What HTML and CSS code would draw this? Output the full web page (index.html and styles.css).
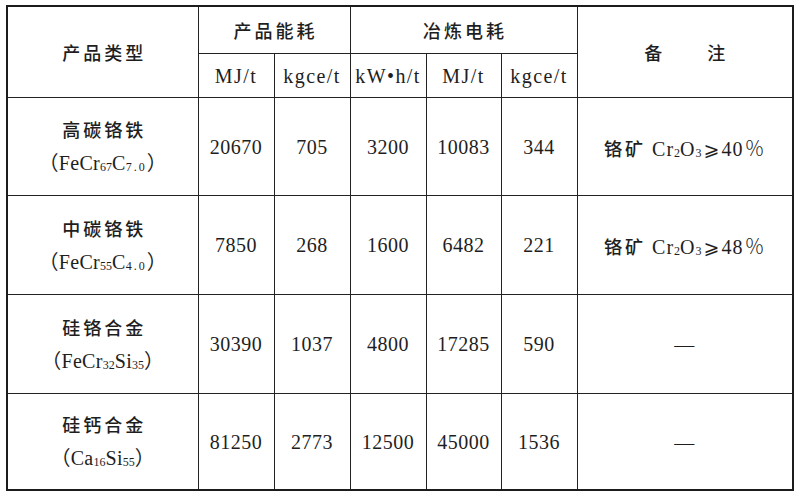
FILE: index.html
```html
<!DOCTYPE html>
<html lang="zh">
<head>
<meta charset="utf-8">
<link rel="stylesheet" href="styles.css">
</head>
<body>
<div class="page">
<table class="tbl">
  <colgroup>
    <col class="c-name"><col class="c-num"><col class="c-num"><col class="c-num"><col class="c-num5"><col class="c-num"><col class="c-note">
  </colgroup>
  <tr class="h1">
    <th rowspan="2" class="cjk">产品类型</th>
    <th colspan="2" class="cjk">产品能耗</th>
    <th colspan="3" class="cjk">冶炼电耗</th>
    <th rowspan="2" class="cjk">备　　注</th>
  </tr>
  <tr class="h2">
    <td class="unit">MJ/t</td>
    <td class="unit">kgce/t</td>
    <td class="unit">kW•h/t</td>
    <td class="unit">MJ/t</td>
    <td class="unit">kgce/t</td>
  </tr>
  <tr class="r1">
    <td class="name"><div class="cjk">高碳铬铁</div><div class="f">（FeCr<sub>67</sub>C<sub class="dot">7.0</sub>）</div></td>
    <td class="num">20670</td><td class="num">705</td><td class="num">3200</td><td class="num">10083</td><td class="num">344</td>
    <td class="note"><span class="cjk">铬矿</span> Cr<sub>2</sub>O<sub>3</sub><span class="ge">⩾</span>40<span class="pc">％</span></td>
  </tr>
  <tr class="r2">
    <td class="name"><div class="cjk">中碳铬铁</div><div class="f">（FeCr<sub>55</sub>C<sub class="dot">4.0</sub>）</div></td>
    <td class="num">7850</td><td class="num">268</td><td class="num">1600</td><td class="num">6482</td><td class="num">221</td>
    <td class="note"><span class="cjk">铬矿</span> Cr<sub>2</sub>O<sub>3</sub><span class="ge">⩾</span>48<span class="pc">％</span></td>
  </tr>
  <tr class="r3">
    <td class="name"><div class="cjk">硅铬合金</div><div class="f">（FeCr<sub>32</sub>Si<sub>35</sub>）</div></td>
    <td class="num">30390</td><td class="num">1037</td><td class="num">4800</td><td class="num">17285</td><td class="num">590</td>
    <td class="note"><span class="dash">—</span></td>
  </tr>
  <tr class="r4">
    <td class="name"><div class="cjk">硅钙合金</div><div class="f">（Ca<sub>16</sub>Si<sub>55</sub>）</div></td>
    <td class="num">81250</td><td class="num">2773</td><td class="num">12500</td><td class="num">45000</td><td class="num">1536</td>
    <td class="note"><span class="dash">—</span></td>
  </tr>
</table>
</div>
</body>
</html>
```
FILE: styles.css
```css
html, body {
  margin: 0;
  padding: 0;
  background: #ffffff;
}
.page {
  padding: 5px 0 0 6px;
}
.tbl {
  border-collapse: collapse;
  table-layout: fixed;
  width: 787px;
  border: 2px solid #1c1c1c;
  color: #1e1e1e;
  font-family: "Liberation Serif", "Noto Sans CJK SC", serif;
  font-size: 20px;
}
.c-name { width: 191px; }
.c-num { width: 76px; }
.c-num5 { width: 75px; }
.c-note { width: 216px; }
.tbl th, .tbl td {
  border: 1px solid #222;
  padding: 0;
  text-align: center;
  vertical-align: middle;
  font-weight: normal;
}
.tbl .cjk {
  font-family: "Noto Sans CJK SC", sans-serif;
  font-weight: 500;
  font-size: 18px;
  letter-spacing: 3px;
}
.tbl th.cjk { padding-left: 3px; }
.h1 { height: 47px; }
.h2 { height: 44px; }
.r1 { height: 98px; }
.r2 { height: 99px; }
.r3 { height: 99px; }
.r4 { height: 97px; }
.tbl .unit {
  letter-spacing: 1.4px;
  padding-top: 3px;
}
.tbl .num {
  letter-spacing: 0.5px;
  padding-top: 2px;
}
.name div {
  height: 34px;
  line-height: 34px;
}
.tbl .name .cjk { padding-left: 3px; }
.f {
  letter-spacing: 0.3px;
}
sub {
  font-size: 12px;
  vertical-align: baseline;
  position: relative;
  top: 1px;
  letter-spacing: 0;
}
.dot {
  letter-spacing: 2px;
}
.tbl .note {
  letter-spacing: 1px;
  padding-top: 2px;
}
.tbl .note .cjk {
  letter-spacing: 3px;
}
.ge {
  font-family: "DejaVu Serif", "DejaVu Sans", serif;
  font-size: 19px;
  margin: 0 1px 0 2px;
}
.pc {
  display: inline-block;
  width: 22px;
  text-align: center;
  font-family: "Noto Sans CJK SC", sans-serif;
  font-size: 20px;
  font-weight: 300;
  letter-spacing: 0;
}
.dash {
  display: inline-block;
  font-size: 20px;
  line-height: 20px;
  transform: scaleY(0.8);
}
```
